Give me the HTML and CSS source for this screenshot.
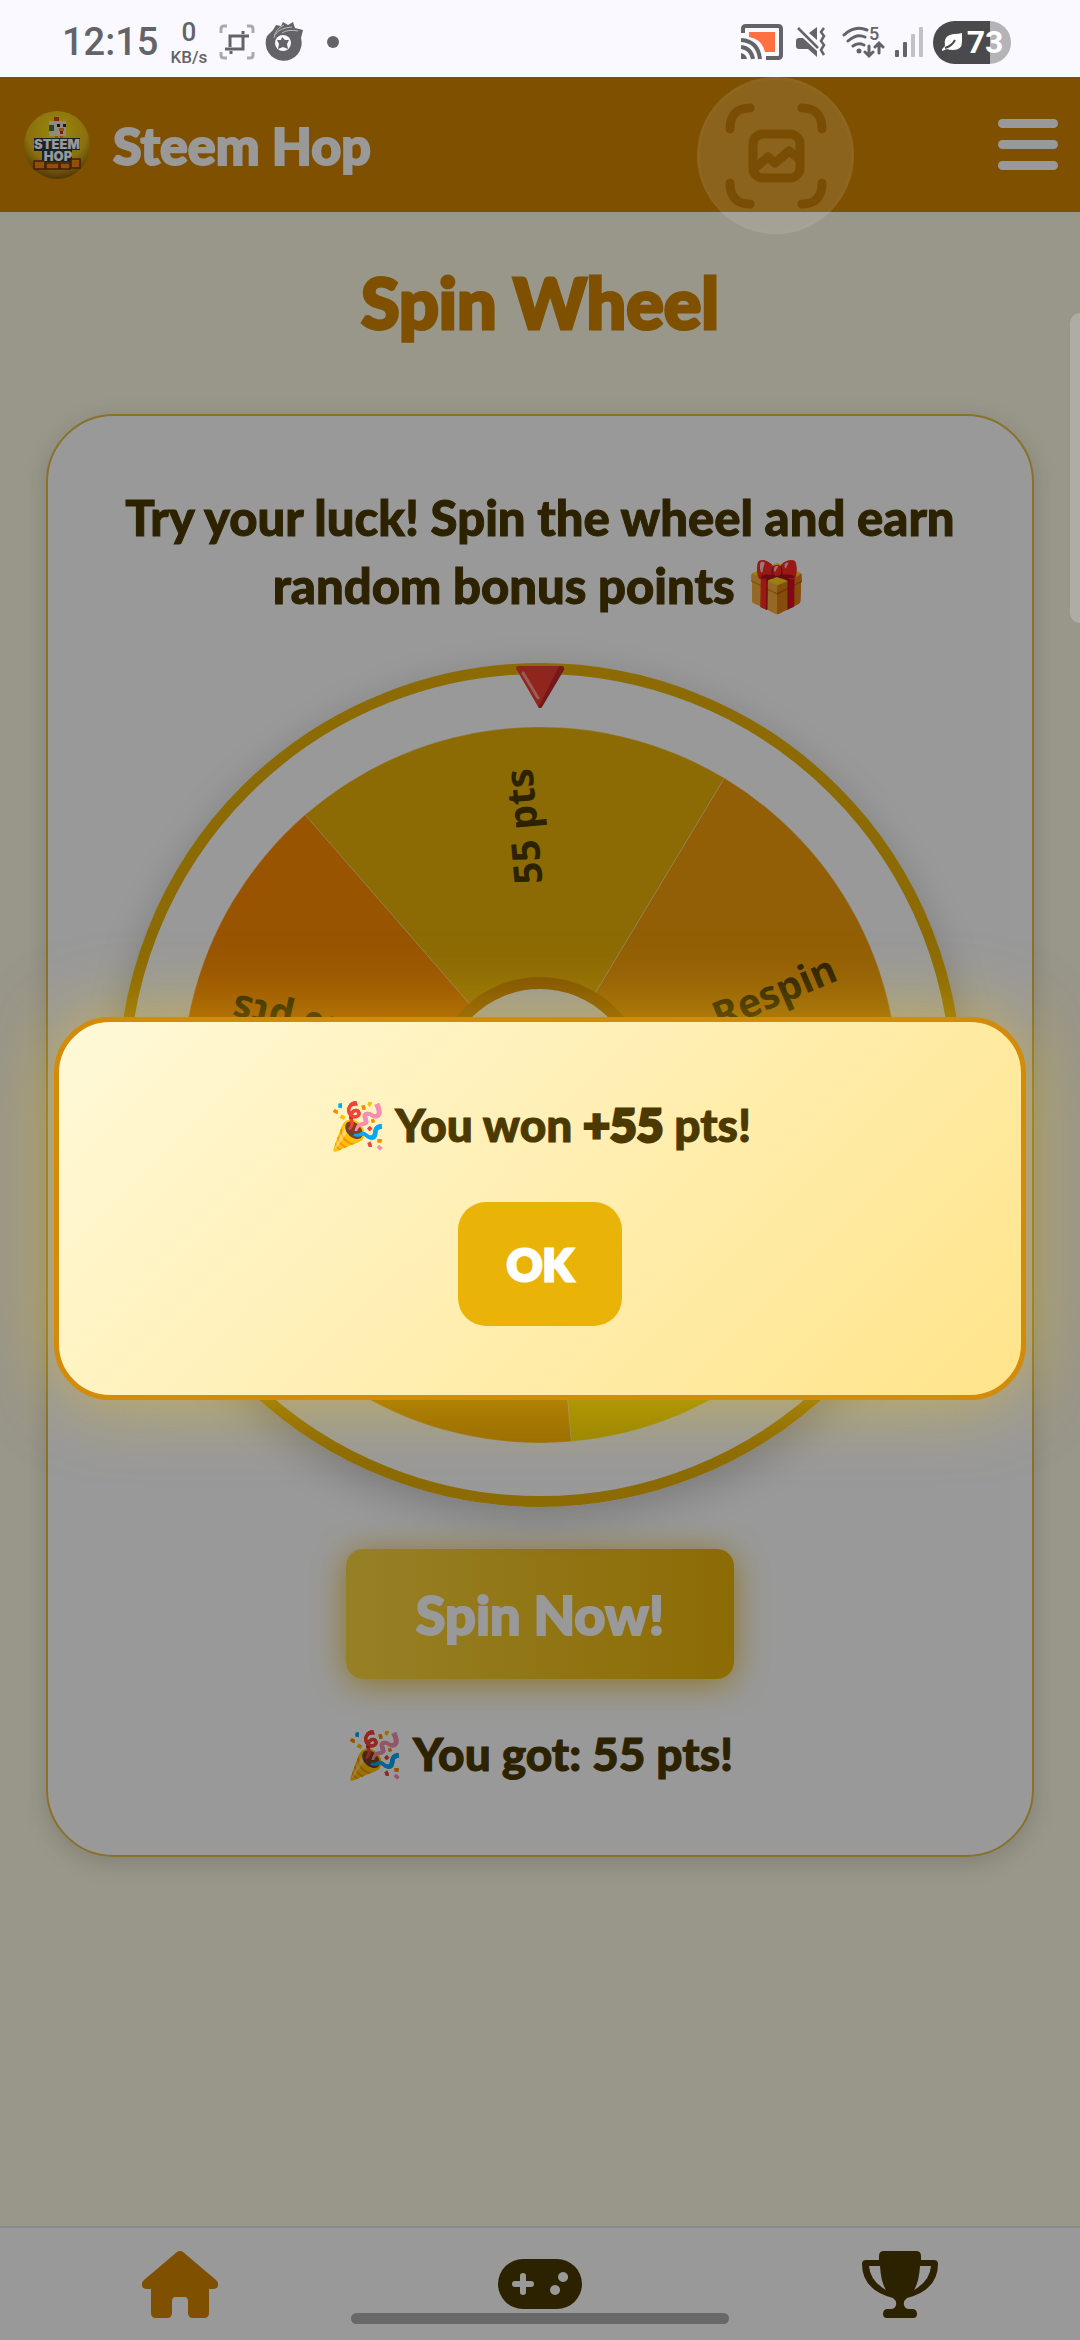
FILE: index.html
```html
<!DOCTYPE html>
<html lang="en">
<head>
  <meta charset="UTF-8" />
  <meta name="viewport" content="width=device-width, initial-scale=1.0" />
  <title>Steem Hop - Spin Wheel</title>
  <link rel="stylesheet" href="styles.css">
</head>
<body>
  <div class="status-bar">
    <div class="status-left">
      <span class="clock">12:15</span>
      <span class="net-speed"><b>0</b><small>KB/s</small></span>
      <svg class="crop-icon" viewBox="0 0 36 36" fill="none" stroke-width="3">
        <path stroke="#aaaaae" d="M2 9V5q0-3 3-3h3M28 2h3q3 0 3 3v4M34 28v3q0 3-3 3h-3M8 34H5q-3 0-3-3v-3" />
        <path stroke="#646468" d="M6 25h18V12M11 23V12h19M24 10V7M12 27v3" />
      </svg>
      <svg class="app-icon" viewBox="0 0 40 40">
        <path fill="#646468" d="M9 8l3-5 5 1 2-4 5 3 5-3 2 6 8 2-2 8A18 18 0 1 1 3 14z" />
        <circle cx="19" cy="21" r="8" fill="#faf9ff" />
        <path fill="#646468" d="M18 15l3 3 4 0-2 4 1 5-5-2-5 2 1-5-2-4 4 0z" />
        <path fill="none" stroke="#bbb" stroke-width="1" d="M11 13q4-7 17-8M18 11q6-4 16-2M10 16q1-9 10-13" />
      </svg>
      <span class="dot"></span>
    </div>
    <div class="status-right">
      <svg class="cast-icon" viewBox="0 0 42 36" fill="none" stroke="#646468" stroke-width="4">
        <path fill="#ff7043" stroke="none" d="M8 8h26v20H24Q21 15 8 13z" />
        <path d="M2 9V5q0-3 3-3h32q3 0 3 3v26q0 3-3 3H25" />
        <path d="M0 16q17 1 19 19M0 23q10 1 12 12" />
        <path fill="#646468" stroke="none" d="M0 29q5 1 6 6H0z" />
      </svg>
      <svg class="mute-icon" viewBox="0 0 30 30">
        <path fill="#646468" d="M13 6l8-6v13zM0 14q0-3 3-3h4l14 13v6l-9-8H3q-3 0-3-3z" />
        <path fill="none" stroke="#646468" stroke-width="2.5" d="M2 1l20 20M28 1l-3 4 3 4-3 5 3 4-3 5 3 5" />
      </svg>
      <svg class="wifi-icon" viewBox="0 -6 43 45">
        <g fill="none" stroke="#646468" stroke-width="3" stroke-linecap="round">
          <path d="M2 9Q13-1 25 4M6 15q9-8 17-4M11 20q5-4 11-1" />
          <path d="M27 20v10M23 26l4 4 4-4M37 27V18M33 21l4-4 4 4" />
        </g>
        <circle cx="17" cy="25" r="2.5" fill="#646468" />
        <text x="27" y="14" class="wifi-band">5</text>
      </svg>
      <svg class="signal-icon" viewBox="0 0 28 30">
        <rect x="0" y="23" width="4" height="7" rx="1" fill="#646468" />
        <rect x="8" y="15" width="4" height="15" rx="1" fill="#646468" />
        <rect x="16" y="7" width="4" height="23" rx="1" fill="#c2c1c7" />
        <rect x="24" y="0" width="4" height="30" rx="1" fill="#c2c1c7" />
      </svg>
      <span class="battery">
        <svg class="leaf-icon" viewBox="0 0 22 20">
          <path fill="#fff" d="M21 1v9q0 8-9 8-4 0-6-1l-5 2v-2l3-3Q2 3 13 2q5 0 8-1z" />
          <path fill="none" stroke="#4a4a4c" stroke-width="2" d="M4 16q7-2 10-8" />
        </svg>
        73
      </span>
    </div>
  </div>

  <div class="app">
    <header class="header">
      <svg class="logo" viewBox="0 0 66 68">
        <defs>
          <radialGradient id="logoBg" cx="50%" cy="30%" r="70%">
            <stop offset="0" stop-color="#ffe51a" />
            <stop offset=".65" stop-color="#e8ba14" />
            <stop offset="1" stop-color="#8a5c10" />
          </radialGradient>
        </defs>
        <ellipse cx="33" cy="34" rx="33" ry="34" fill="url(#logoBg)" />
        <path fill="#e03c20" d="M30 6h5v4h-5z" />
        <path fill="#efe8d8" d="M25 10h17v15H25z" />
        <path fill="#3d7a38" d="M25 14h5v6h-5z" />
        <path fill="#2a2a20" d="M33 13h3v3h-3zM39 13h3v3h-3z" />
        <path fill="#f08a18" d="M35 17h5v3h-5zM31 25h3v3h-3zM36 25h3v3h-3z" />
        <path fill="#c42e18" d="M36 20h3v3h-3z" />
        <path fill="#2c3844" d="M10 27h46v12h-8v12H18V40h-8z" />
        <path fill="#f0860f" stroke="#6b3608" stroke-width="1.5" d="M10 50h11v8H10zM22 52h13v6H22zM36 52h10v6H36zM47 48h9v9h-9z" />
        <text x="33" y="38" text-anchor="middle" class="logo-text">STEEM</text>
        <text x="34" y="50" text-anchor="middle" class="logo-text">HOP</text>
      </svg>
      <span class="brand">Steem Hop</span>
      <button class="menu-button" type="button" aria-label="Menu">
        <span></span><span></span><span></span>
      </button>
    </header>

    <main class="content">
      <h1>Spin Wheel</h1>
      <section class="card">
        <p class="card-text">Try your luck! Spin the wheel and earn random bonus points 🎁</p>
        <div class="wheel-box">
          <svg class="pointer" viewBox="0 0 50 44">
            <path fill="#f03f33" stroke="#f03f33" stroke-width="4" stroke-linejoin="round" d="M3 3h44L25 41z" />
            <path fill="#c4282a" d="M44 1h3q3 1 2 4L27 42q-2 2-4 0l2-3z" />
            <path fill="none" stroke="#ff9a90" stroke-width="3" stroke-linecap="round" d="M8 8l15 25" />
          </svg>
          <svg class="wheel" id="wheel" viewBox="-411 -411 822 822"></svg>
        </div>
        <button class="spin-button" type="button">Spin Now!</button>
        <p class="result">🎉 You got: 55 pts!</p>
      </section>
    </main>

    <nav class="bottom-nav">
      <a href="#home" class="active" aria-label="Home">
        <svg class="home-icon" viewBox="0 0 76 67">
          <path d="M35 1q3-2 6 0l33 28q3 3 2 6-1 3-5 3h-4v24q0 5-5 5H51q-5 0-5-5V50q0-4-4-4h-8q-4 0-4 4v12q0 5-5 5H14q-5 0-5-5V38H5q-4 0-5-3-1-3 2-6z" />
        </svg>
      </a>
      <a href="#games" aria-label="Games">
        <svg class="game-icon" viewBox="0 0 84 50">
          <path fill-rule="evenodd" d="M25 0h34a25 25 0 0 1 0 50H25a25 25 0 0 1 0-50zM25 14q-3 0-3 3v5h-5q-3 0-3 3t3 3h5v5q0 3 3 3t3-3v-5h5q3 0 3-3t-3-3h-5v-5q0-3-3-3zM57 26a5 5 0 1 0 .1 0zM65 13a5 5 0 1 0 .1 0z" />
        </svg>
      </a>
      <a href="#leaderboard" aria-label="Leaderboard">
        <svg class="trophy-icon" viewBox="0 0 76 67">
          <path fill-rule="evenodd" d="M22 0h32q5 0 5 5v4h13q4 0 4 4 0 26-31 34-4 3-3 7 1 4 5 4h3q5 0 5 5 0 4-4 4H25q-4 0-4-4 0-5 5-5h3q4 0 5-4 1-4-3-7Q0 39 0 13q0-4 4-4h13V5q0-5 5-5zM7 15q1 15 17 24-5-8-6-24zM69 15H58q-1 16-6 24 16-9 17-24z" />
        </svg>
      </a>
    </nav>

    <div class="overlay">
      <div class="modal" role="dialog" aria-modal="true" aria-labelledby="modalText">
        <p id="modalText">🎉 You won <strong>+55</strong> pts!</p>
        <button class="ok-button" type="button">OK</button>
      </div>
    </div>

    <div class="capture-bubble">
      <svg viewBox="0 0 102 106" fill="none" stroke="#7a4d04" stroke-width="9" stroke-linecap="round">
        <path d="M5 26Q5 5 25 5M77 5q20 0 20 21M97 80q0 21-20 21M25 101Q5 101 5 80" />
        <rect x="28" y="31" width="47" height="44" rx="10" />
        <path stroke-linejoin="round" d="M30 65l13-11 7 6 14-12 9 7" />
      </svg>
    </div>
    <div class="edge-handle"></div>
    <div class="gesture-bar"></div>
  </div>

  <script>
    const segments = [
      { label: '55 pts', color: '#eab308' },
      { label: 'Respin', color: '#f59e0b' },
      { label: '10 pts', color: '#ffdf00' },
      { label: '25 pts', color: '#ffb300' },
      { label: '40 pts', color: '#ff8c00' }
    ];
    const radius = 358;
    const size = 72;
    const start = -41;

    function point(angle) {
      const rad = (angle - 90) * Math.PI / 180;
      return (radius * Math.cos(rad)).toFixed(1) + ' ' + (radius * Math.sin(rad)).toFixed(1);
    }

    let html = '';
    segments.forEach((segment, i) => {
      const from = start + i * size;
      html += `<path fill="${segment.color}" stroke="#fff" stroke-opacity=".3" d="M0 0L${point(from)}A${radius} ${radius} 0 0 1 ${point(from + size)}Z"/>`;
      html += `<text class="wheel-label" x="317" y="20" text-anchor="end" transform="rotate(${from + size / 2 - 90})">${segment.label}</text>`;
    });
    html += '<circle r="102" fill="#fff" stroke="#d68a00" stroke-width="12"/>';
    document.getElementById('wheel').innerHTML = html;
  </script>
</body>
</html>
```
FILE: styles.css
```css
* {
  margin: 0;
  padding: 0;
  box-sizing: border-box;
}

body {
  min-height: 100vh;
  display: flex;
  flex-direction: column;
  background: #fffbe6;
  color: #4b3900;
  font-family: Lato, "Noto Color Emoji", sans-serif;
  font-weight: 900;
}

button {
  border: none;
  font-family: inherit;
  font-weight: 900;
  cursor: pointer;
}

/* Status bar */
.status-bar {
  height: 77px;
  padding: 8px 69px 0 62px;
  display: flex;
  justify-content: space-between;
  background: #faf9ff;
  color: #646468;
  font-family: Roboto, sans-serif;
  font-weight: 500;
}

.status-left,
.status-right {
  height: 69px;
  display: flex;
  align-items: center;
  padding-bottom: 1px;
}

.status-right {
  gap: 10px;
}

.clock {
  font-size: 38px;
}

.net-speed {
  display: flex;
  flex-direction: column;
  align-items: center;
  margin-left: 12px;
}

.net-speed b {
  font-size: 26px;
  line-height: 30px;
  font-weight: 500;
}

.net-speed small {
  font-size: 17px;
  line-height: 20px;
}

.crop-icon {
  width: 36px;
  height: 36px;
  margin-left: 12px;
}

.app-icon {
  width: 40px;
  height: 40px;
  margin-left: 9px;
}

.dot {
  width: 12px;
  height: 12px;
  margin-left: 23px;
  border-radius: 50%;
  background: #646468;
}

.cast-icon {
  width: 42px;
  height: 36px;
}

.mute-icon {
  width: 30px;
  height: 30px;
  margin-left: 3px;
}

.wifi-icon {
  width: 43px;
  height: 45px;
  margin-left: 6px;
}

.wifi-band {
  font: 500 18px Roboto, sans-serif;
  fill: #646468;
}

.signal-icon {
  width: 28px;
  height: 30px;
}

.battery {
  width: 78px;
  height: 43px;
  display: flex;
  align-items: center;
  justify-content: center;
  gap: 4px;
  border-radius: 22px;
  background: linear-gradient(90deg, #4a4a4c 73%, #b4b3b8 73%);
  color: #fff;
  font-size: 32px;
  font-weight: 700;
}

.leaf-icon {
  width: 22px;
  height: 20px;
}

/* App */
.app {
  position: relative;
  flex: 1;
  display: flex;
  flex-direction: column;
}

.header {
  height: 135px;
  padding: 0 22px 0 24px;
  display: flex;
  align-items: center;
  background: #d28500;
}

.logo {
  width: 66px;
  height: 68px;
}

.logo-text {
  font: 900 13px Inter, sans-serif;
  fill: #fff;
}

.brand {
  margin-left: 23px;
  color: #fff;
  font-size: 52px;
  -webkit-text-stroke: 2px currentColor;
}

.menu-button {
  width: 60px;
  margin-left: auto;
  display: flex;
  flex-direction: column;
  gap: 12px;
  background: none;
}

.menu-button span {
  height: 9px;
  border-radius: 5px;
  background: #fff;
}

.content {
  flex: 1;
  padding: 48px 46px;
}

h1 {
  margin-bottom: 70px;
  color: #d28500;
  font-size: 70px;
  font-weight: 900;
  line-height: 84px;
  text-align: center;
  -webkit-text-stroke: 3px currentColor;
}

.card {
  padding: 67px 70px;
  display: flex;
  flex-direction: column;
  align-items: center;
  border: 2px solid #e5bd45;
  border-radius: 68px;
  background: #fff;
  box-shadow: 0 6px 24px rgba(0, 0, 0, 0.15);
}

.card-text,
.result,
.modal p {
  font-size: 46px;
  line-height: 68px;
  text-align: center;
  -webkit-text-stroke: 1px currentColor;
}

.card-text {
  font-size: 49px;
}

.modal strong {
  font-weight: 900;
  -webkit-text-stroke: 3px currentColor;
}

.wheel-box {
  position: relative;
  width: 100%;
  margin: 44px 0 42px;
}

.wheel {
  display: block;
  width: 100%;
  border: 11px solid #eab308;
  border-radius: 50%;
  box-shadow: 0 12px 40px rgba(0, 0, 0, 0.2);
}

.wheel-label {
  font: 700 39px "Noto Sans", sans-serif;
  fill: #4b3900;
}

.pointer {
  position: absolute;
  top: 2px;
  left: 50%;
  width: 50px;
  height: 44px;
  transform: translateX(-50%);
}

.spin-button {
  height: 130px;
  margin-bottom: 41px;
  padding: 0 70px;
  border-radius: 17px;
  background: linear-gradient(90deg, #fbd640, #eab308);
  box-shadow: 0 4px 34px rgba(234, 179, 8, 0.8);
  color: #fff;
  font-size: 54px;
  -webkit-text-stroke: 2px currentColor;
}

.bottom-nav {
  height: 114px;
  display: flex;
  border-top: 2px solid #e5e7eb;
  background: #fff;
}

.bottom-nav a {
  flex: 1;
  display: flex;
  align-items: center;
  justify-content: center;
  color: #4b3900;
}

.bottom-nav .active {
  color: #d28500;
}

.bottom-nav svg {
  fill: currentColor;
}

.home-icon,
.trophy-icon {
  width: 76px;
  height: 67px;
}

.game-icon {
  width: 84px;
  height: 50px;
}

/* Win dialog */
.overlay {
  position: absolute;
  inset: 0;
  display: flex;
  align-items: center;
  justify-content: center;
  background: rgba(0, 0, 0, 0.4);
}

.modal {
  width: 90%;
  padding: 69px;
  display: flex;
  flex-direction: column;
  align-items: center;
  gap: 43px;
  border: 5px solid #d48b0a;
  border-radius: 56px;
  background: linear-gradient(135deg, #fff9d8, #ffe48a);
  box-shadow: 0 0 72px rgba(250, 204, 21, 0.5);
}

.ok-button {
  height: 124px;
  padding: 0 49px;
  border-radius: 28px;
  background: #eab308;
  color: #fff;
  font-size: 44px;
  -webkit-text-stroke: 3px currentColor;
}

/* Floating system controls */
.capture-bubble {
  position: absolute;
  top: 0;
  left: 697px;
  width: 157px;
  height: 157px;
  display: flex;
  align-items: center;
  justify-content: center;
  border: 3px solid rgba(255, 255, 255, 0.02);
  border-radius: 50%;
  background: rgba(255, 255, 255, 0.11);
}

.capture-bubble svg {
  width: 102px;
  height: 106px;
}

.edge-handle {
  position: absolute;
  top: 236px;
  right: 0;
  width: 10px;
  height: 310px;
  border-radius: 10px 0 0 10px;
  background: rgba(255, 255, 255, 0.22);
}

.gesture-bar {
  position: absolute;
  bottom: 16px;
  left: 50%;
  width: 35%;
  height: 11px;
  border-radius: 6px;
  background: #686868;
  transform: translateX(-50%);
}
```
